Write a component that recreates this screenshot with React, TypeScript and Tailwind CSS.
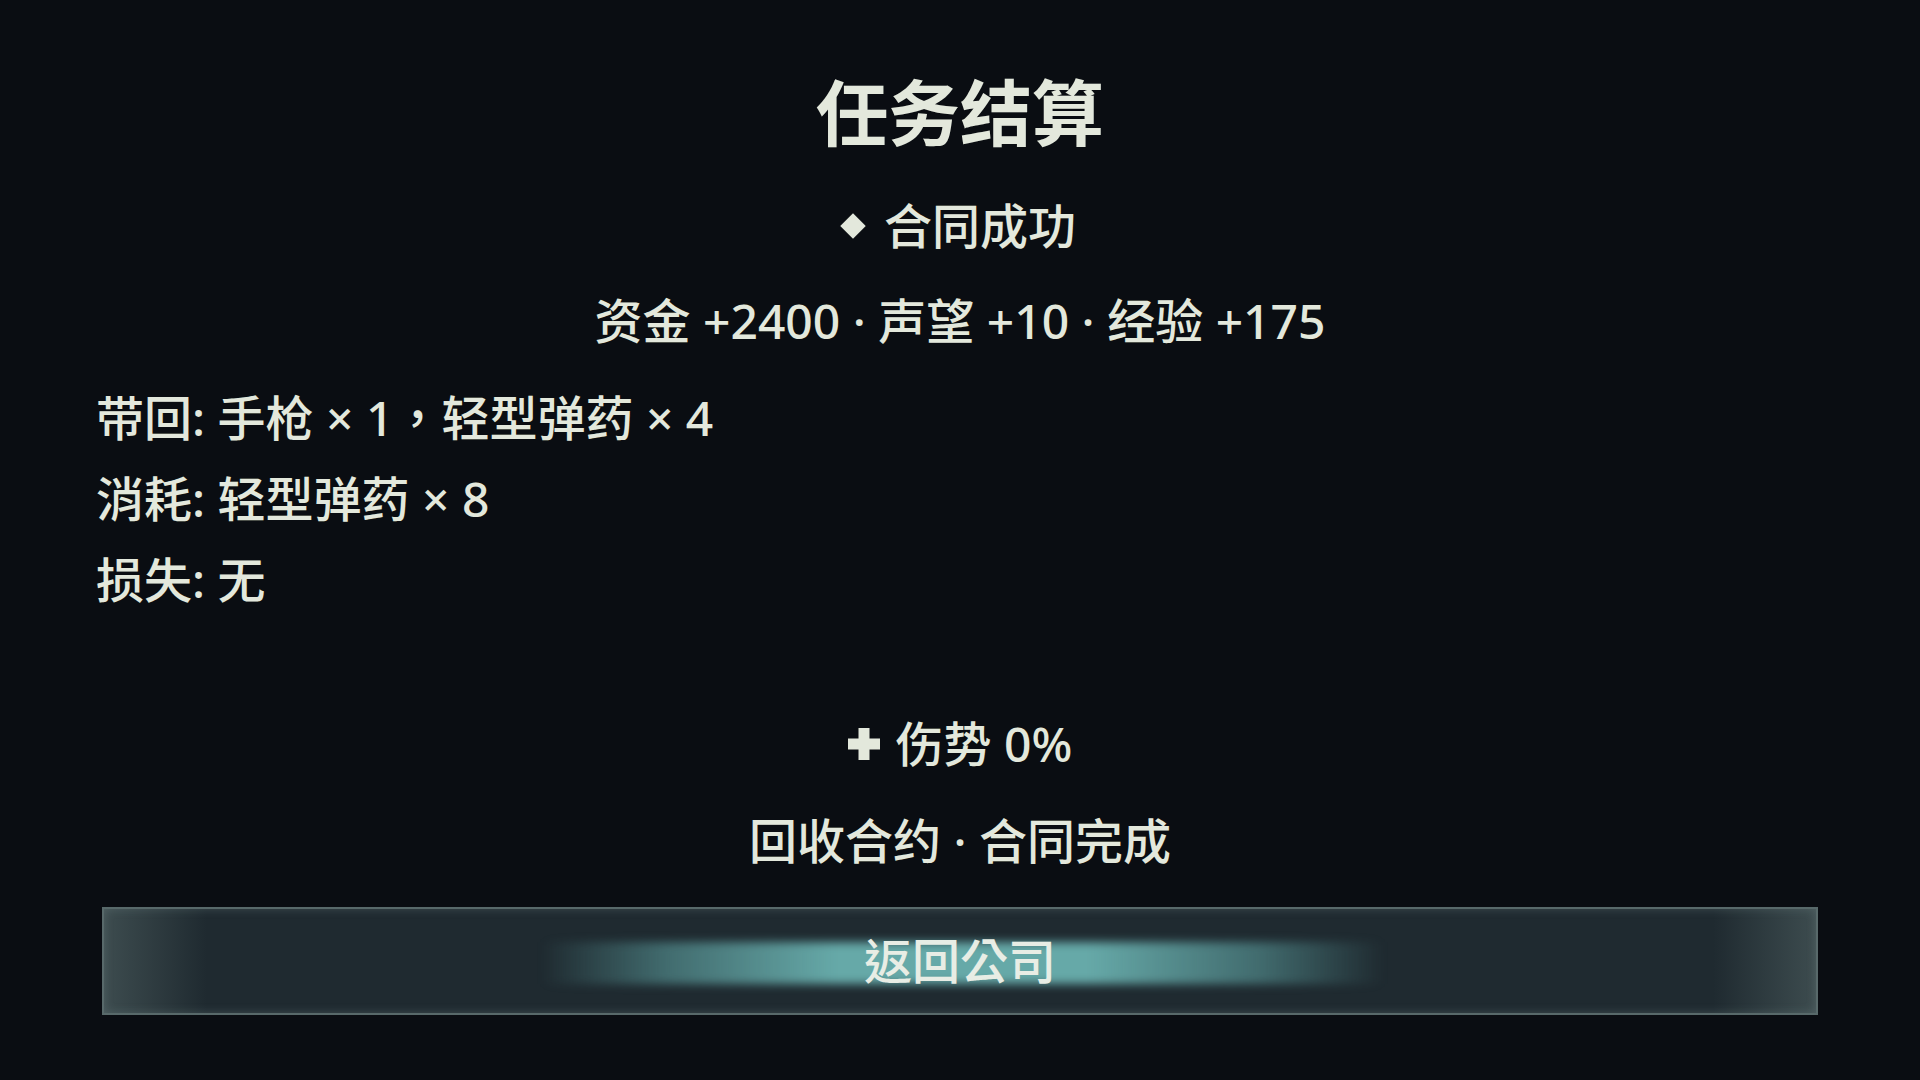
export default function App() {
  const font = { fontFamily: '"Noto Sans", "Noto Sans CJK TC", "Noto Sans CJK SC", sans-serif' }

  const items = [
    '带回: 手枪 × 1，轻型弹药 × 4',
    '消耗: 轻型弹药 × 8',
    '损失: 无',
  ]

  return (
    <div
      className="w-[1920px] h-[1080px] bg-[#0a0d12] text-[#e3e8dc] flex flex-col overflow-hidden"
      style={font}
    >
      {/* Header */}
      <h1 className="mt-[69px] text-center text-[72px] leading-[86px] font-bold">任务结算</h1>

      <div className="mt-[42px] flex items-center justify-center gap-[22px] text-[48px] leading-[58px] font-medium">
        <span className="w-[18px] h-[18px] bg-[#e3e8dc] rotate-45" />
        <span>合同成功</span>
      </div>

      <div className="mt-[37px] text-center text-[48px] leading-[58px] font-medium">
        资金 +2400 · 声望 +10 · 经验 +175
      </div>

      {/* Item summary */}
      <div className="mt-[27px] px-[96px] flex flex-col">
        {items.map((line) => (
          <div key={line} className="text-[48px] leading-[81px] font-medium">
            {line}
          </div>
        ))}
      </div>

      <div className="mt-[95px] flex items-center justify-center gap-[16px] text-[48px] leading-[58px] font-medium">
        <svg width="32" height="32" viewBox="0 0 32 32">
          <path d="M10.5 0h11v10.5H32v11H21.5V32h-11V21.5H0v-11h10.5z" fill="#e3e8dc" />
        </svg>
        <span>伤势 0%</span>
      </div>

      <div className="mt-[39px] text-center text-[48px] leading-[58px] font-medium">回收合约 · 合同完成</div>

      {/* Return button */}
      <div className="mt-[37px] px-[102px]">
        <button className="relative w-full h-[108px] border-2 border-[#58696a] bg-[linear-gradient(to_right,#3d4c4f,#1f2a30_6%,#1f2a30_94%,#3d4c4f)] shadow-[inset_0_0_10px_rgba(120,140,140,0.35)] flex items-center justify-center overflow-hidden">
          <span className="absolute left-[437px] right-[432px] top-[33px] h-[42px] blur-[5px] bg-[linear-gradient(to_right,rgba(95,163,163,0),rgba(95,163,163,0.55)_15%,#66a9a8_35%,#66a9a8_65%,rgba(95,163,163,0.55)_85%,rgba(95,163,163,0))]" />
          <span className="relative text-[48px] leading-[58px] font-medium text-[#e8ede5]" style={font}>
            返回公司
          </span>
        </button>
      </div>
    </div>
  )
}
